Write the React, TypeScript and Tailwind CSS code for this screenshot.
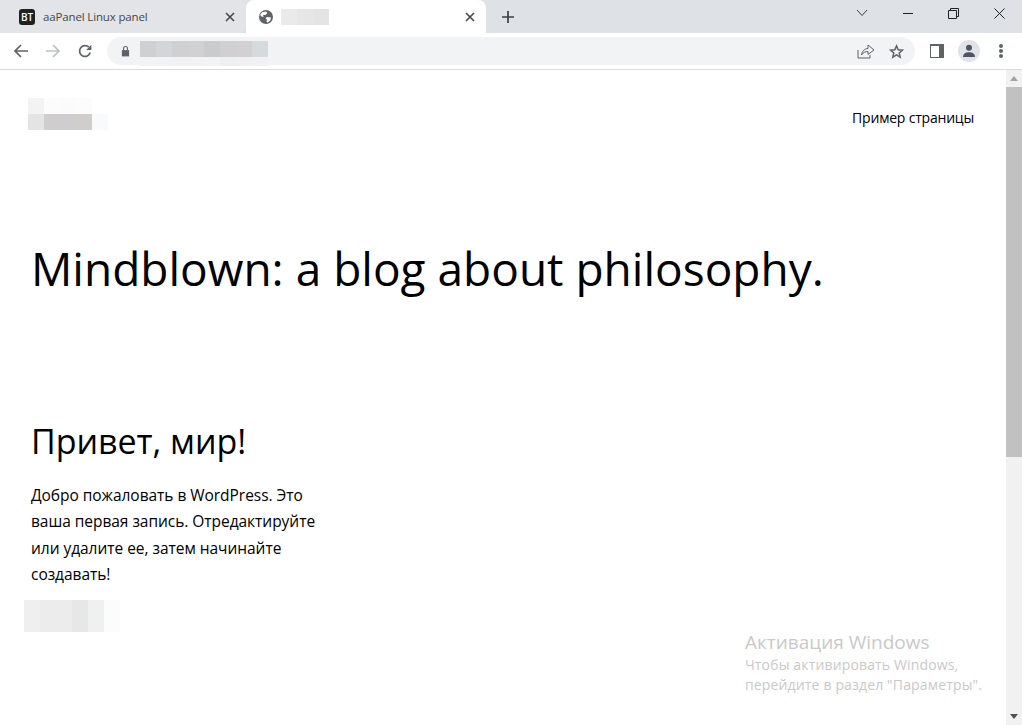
import React from "react";

const font = { fontFamily: '"Open Sans", "Noto Sans", sans-serif' };

function Mosaic({ rows, size = 16, lastHeight }: { rows: string[][]; size?: number; lastHeight?: number }) {
  return (
    <div className="flex flex-col">
      {rows.map((r, i) => (
        <div key={i} className="flex">
          {r.map((c, j) => (
            <div key={j} style={{ width: size, height: i === rows.length - 1 && lastHeight ? lastHeight : size, background: c }} />
          ))}
        </div>
      ))}
    </div>
  );
}

function CloseIcon({ cls }: { cls: string }) {
  return (
    <svg width="10" height="10" viewBox="0 0 10 10" className={cls}>
      <path d="M1 1 L9 9 M9 1 L1 9" stroke="currentColor" strokeWidth="1.6" fill="none" />
    </svg>
  );
}

function Tabs() {
  return (
    <div className="flex h-[33px] bg-[#dee1e6] shrink-0">
      <div className="w-[246px] h-full bg-[#e3e4e7] rounded-br-[8px] flex items-center pl-[19px] pr-[11px]">
        <div className="w-4 h-4 rounded-[3px] bg-[#202124] text-white text-[10px] font-semibold flex items-center justify-center leading-none">BT</div>
        <span className="ml-2 text-[11.5px] text-[#45474a] whitespace-nowrap tracking-[-0.15px]">aaPanel Linux panel</span>
        <CloseIcon cls="ml-auto text-[#45474a]" />
      </div>
      <div className="w-[240px] h-full bg-white rounded-t-[8px] flex items-center pl-[13px] pr-[11px]">
        <svg width="14" height="14" viewBox="0 0 14 14">
          <circle cx="7" cy="7" r="7" fill="#5f6368" />
          <path d="M3 2.2 L7 1.5 L8.4 3 L6.5 5 L4 5 L4.6 7 L2.5 6.5 L1.2 5 Z M8 7 L12 7.5 L11.4 10.2 L8.8 12.4 L7.6 12 L7.8 9.6 L6.6 8.2 Z" fill="#fff" />
        </svg>
        <div className="ml-2 flex">
          <div className="w-4 h-4 bg-[#ece9e9]" />
          <div className="w-4 h-4 bg-[#e6e6e6]" />
          <div className="w-4 h-4 bg-[#e3e4e3]" />
        </div>
        <CloseIcon cls="ml-auto text-[#45474a]" />
      </div>
      <div className="w-[44px] flex items-center justify-center">
        <svg width="12" height="12" viewBox="0 0 12 12">
          <path d="M6 0 V12 M0 6 H12" stroke="#3c4043" strokeWidth="1.7" />
        </svg>
      </div>
      <div className="flex-1 flex items-center justify-end pb-[7px]">
        <svg width="12" height="8" viewBox="0 0 12 8" className="mr-[35px]">
          <path d="M1 1 L6 6.5 L11 1" stroke="#3c4043" strokeWidth="1" fill="none" />
        </svg>
        <div className="w-[10px] h-px bg-[#202124] mr-[35px]" />
        <svg width="11" height="11" viewBox="0 0 11 11" className="mr-[35px]">
          <path d="M0.5 2.5 H8.5 V10.5 H0.5 Z M2.5 2.5 V0.5 H10.5 V8.5 H8.5" stroke="#202124" strokeWidth="1" fill="none" />
        </svg>
        <svg width="11" height="11" viewBox="0 0 11 11" className="mr-[17px]">
          <path d="M0.5 0.5 L10.5 10.5 M10.5 0.5 L0.5 10.5" stroke="#202124" strokeWidth="1" fill="none" />
        </svg>
      </div>
    </div>
  );
}

function Toolbar() {
  return (
    <div className="flex items-center h-[37px] bg-white border-b border-[#dadce0] pl-[14px] shrink-0">
      <svg width="14" height="14" viewBox="0 0 14 14">
        <path d="M14 7 H1.5 M7 1 L1 7 L7 13" stroke="#5f6368" strokeWidth="1.7" fill="none" />
      </svg>
      <svg width="14" height="14" viewBox="0 0 14 14" className="ml-[18px]">
        <path d="M0 7 H12.5 M7 1 L13 7 L7 13" stroke="#bdc1c6" strokeWidth="1.7" fill="none" />
      </svg>
      <svg width="14" height="14" viewBox="0 0 14 14" className="ml-[18px]">
        <path d="M12.2 8.5 A5.4 5.4 0 1 1 10.8 3.2" stroke="#5f6368" strokeWidth="1.7" fill="none" />
        <path d="M13.4 0.8 V6 H8.2 Z" fill="#5f6368" />
      </svg>
      <div className="ml-[15px] w-[808px] h-[28px] rounded-full bg-[#f1f3f4] flex items-center relative">
        <svg width="9" height="12" viewBox="0 0 10 12" className="ml-[14px]">
          <path d="M1 5 H9 V12 H1 Z" fill="#5f6368" />
          <path d="M2.8 5.5 V3.2 A2.2 2.2 0 0 1 7.2 3.2 V5.5" stroke="#5f6368" strokeWidth="1.2" fill="none" />
        </svg>
        <div className="absolute left-[33px] top-[4px]">
          <Mosaic
            lastHeight={9}
            rows={[
              ["#d0cfd1", "#d3d6d8", "#d0d0d2", "#d1d0d2", "#cbcacd", "#d0cfd1", "#d3d0d2", "#d5dadd"],
              ["#f1f3f4", "#f1f3f4", "#f2f2f3", "#f2f2f3", "#f2f3f4", "#eeeff0", "#eff0f1", "#f0f1f2"],
            ]}
          />
        </div>
        <svg width="18" height="16" viewBox="0 0 18 16" className="ml-auto">
          <path d="M1 7 V15 H13 V12" stroke="#5f6368" strokeWidth="1" fill="none" />
          <path d="M4.5 12 C5 8 8 5.5 11 5.5 V2 L17 7 L11 11.5 V8.5 C8.5 8.5 6 9.5 4.5 12 Z" stroke="#5f6368" strokeWidth="1" fill="none" />
        </svg>
        <svg width="15" height="15" viewBox="0 0 24 24" className="ml-[14px] mr-[11px]">
          <path d="M12 3 L14.7 9.3 L21.5 9.9 L16.3 14.4 L17.9 21 L12 17.5 L6.1 21 L7.7 14.4 L2.5 9.9 L9.3 9.3 Z" stroke="#5f6368" strokeWidth="2.4" fill="none" />
        </svg>
      </div>
      <div className="ml-[15px] w-[14px] h-[14px] bg-[#5f6368] flex items-center pl-[1px]">
        <div className="w-[8px] h-[11px] bg-white" />
      </div>
      <div className="ml-[14px] w-[22px] h-[22px] rounded-full bg-[#e0e3e8] flex items-center justify-center">
        <svg width="14" height="14" viewBox="0 0 14 14">
          <circle cx="7" cy="3.8" r="3" fill="#4c5466" />
          <path d="M1 13 C1 9.5 4 8.3 7 8.3 C10 8.3 13 9.5 13 13 Z" fill="#4c5466" />
        </svg>
      </div>
      <div className="ml-[19px] flex flex-col gap-[1px]">
        <div className="w-[4px] h-[4px] rounded-full bg-[#5f6368]" />
        <div className="w-[4px] h-[4px] rounded-full bg-[#5f6368]" />
        <div className="w-[4px] h-[4px] rounded-full bg-[#5f6368]" />
      </div>
    </div>
  );
}

function Scrollbar() {
  return (
    <div className="w-[16px] h-full bg-[#f1f1f1] shrink-0 flex flex-col items-center">
      <svg width="8" height="5" viewBox="0 0 8 5" className="mt-[6px]">
        <path d="M4 0 L8 5 H0 Z" fill="#a3a3a3" />
      </svg>
      <div className="mt-[6px] w-full h-[370px] bg-[#c1c1c1]" />
      <svg width="8" height="5" viewBox="0 0 8 5" className="mt-auto mb-[6px]">
        <path d="M0 0 H8 L4 5 Z" fill="#505050" />
      </svg>
    </div>
  );
}

export default function App() {
  return (
    <div className="w-[1022px] h-[725px] flex flex-col overflow-hidden bg-white text-black" style={font}>
      <Tabs />
      <Toolbar />
      <div className="flex-1 flex min-h-0 relative">
        <main className="flex-1 min-w-0">
          <header className="flex justify-between pl-[28px] pr-[32px] pt-[28px]">
            <Mosaic
              rows={[
                ["#f3f3f3", "#fcfcfc", "#fbfbfb", "#fcfcfc", "#ffffff"],
                ["#e3e4e3", "#cfcdcd", "#cfcdcd", "#cfcecd", "#f9fafc"],
              ]}
            />
            <span className="text-[14px] leading-[19px] mt-[10px] tracking-[-0.2px]">Пример страницы</span>
          </header>
          <h1 className="pl-[31px] mt-[106px] text-[46px] leading-[65px] font-normal whitespace-nowrap">
            Mindblown: a blog about philosophy.
          </h1>
          <h2 className="pl-[31px] mt-[117px] text-[34px] leading-[46px] font-normal tracking-[-0.05px]">Привет, мир!</h2>
          <p className="pl-[31px] mt-[18px] w-[330px] text-[15.5px] leading-[26.4px] tracking-[-0.04px]">
            Добро пожаловать в WordPress. Это ваша первая запись. Отредактируйте или удалите ее, затем начинайте создавать!
          </p>
          <div className="pl-[24px] mt-[12px]">
            <Mosaic rows={[
              ["#efefef", "#ececec", "#ececec", "#e7e7e7", "#eff0f0", "#fcfcfc"],
              ["#efefef", "#ececec", "#ececec", "#e7e7e7", "#eff0f0", "#fcfcfc"],
            ]} />
          </div>
        </main>
        <Scrollbar />
        <div className="absolute left-[745px] top-[559px] text-[#c9c9c9] whitespace-nowrap">
          <div className="text-[19px] leading-[26px]">Активация Windows</div>
          <div className="text-[14px] leading-[20px] tracking-[0.15px]">Чтобы активировать Windows,</div>
          <div className="text-[14px] leading-[20px] tracking-[0.15px]">перейдите в раздел "Параметры".</div>
        </div>
      </div>
    </div>
  );
}
